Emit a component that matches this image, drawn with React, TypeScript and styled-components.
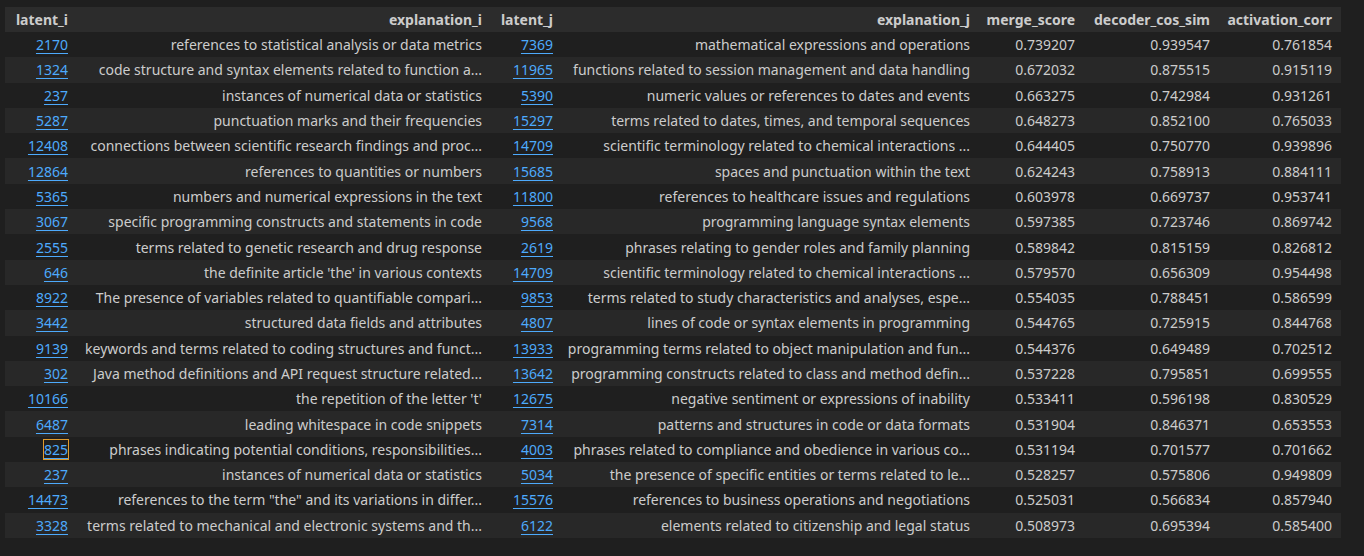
import { FC } from "react";
import styled, { createGlobalStyle } from "styled-components";

const GlobalStyle = createGlobalStyle`
  html, body {
    margin: 0;
    background: #1f1f1f;
  }
`;

const Page = styled.div`
  padding: 7px 23px 0 5px;
  font-family: "Noto Sans", "Open Sans", sans-serif;
  font-size: 14px;
  color: #cccccc;
`;

const Table = styled.table`
  width: 1336px;
  table-layout: fixed;
  border-collapse: collapse;
  border-spacing: 0;
`;

const HeadCell = styled.th`
  height: 25px;
  padding: 0 9px 0 4px;
  background: #2c2c2c;
  font-weight: 700;
  text-align: right;
  white-space: nowrap;
  overflow: hidden;
`;

const Row = styled.tr<{ $alt: boolean }>`
  background: ${(p) => (p.$alt ? "#282828" : "#1f1f1f")};
`;

const Cell = styled.td`
  height: 25.3px;
  padding: 0 9px 0 4px;
  text-align: right;
  white-space: nowrap;
  overflow: hidden;
  text-overflow: ellipsis;
`;

const LatentLink = styled.a<{ $focused?: boolean }>`
  color: #4daafc;
  text-decoration: underline;
  text-underline-offset: 3px;
  outline: ${(p) => (p.$focused ? "1px solid #e09b2d" : "none")};
  outline-offset: 0;
`;

const columns = [
  { name: "latent_i", width: 72 },
  { name: "explanation_i", width: 414 },
  { name: "latent_j", width: 71 },
  { name: "explanation_j", width: 417 },
  { name: "merge_score", width: 105 },
  { name: "decoder_cos_sim", width: 135 },
  { name: "activation_corr", width: 122 },
];

type Pair = [number, string, number, string, string, string, string];

const rows: Pair[] = [
  [2170, "references to statistical analysis or data metrics", 7369, "mathematical expressions and operations", "0.739207", "0.939547", "0.761854"],
  [1324, "code structure and syntax elements related to function a...", 11965, "functions related to session management and data handling", "0.672032", "0.875515", "0.915119"],
  [237, "instances of numerical data or statistics", 5390, "numeric values or references to dates and events", "0.663275", "0.742984", "0.931261"],
  [5287, "punctuation marks and their frequencies", 15297, "terms related to dates, times, and temporal sequences", "0.648273", "0.852100", "0.765033"],
  [12408, "connections between scientific research findings and proc...", 14709, "scientific terminology related to chemical interactions ...", "0.644405", "0.750770", "0.939896"],
  [12864, "references to quantities or numbers", 15685, "spaces and punctuation within the text", "0.624243", "0.758913", "0.884111"],
  [5365, "numbers and numerical expressions in the text", 11800, "references to healthcare issues and regulations", "0.603978", "0.669737", "0.953741"],
  [3067, "specific programming constructs and statements in code", 9568, "programming language syntax elements", "0.597385", "0.723746", "0.869742"],
  [2555, "terms related to genetic research and drug response", 2619, "phrases relating to gender roles and family planning", "0.589842", "0.815159", "0.826812"],
  [646, "the definite article 'the' in various contexts", 14709, "scientific terminology related to chemical interactions ...", "0.579570", "0.656309", "0.954498"],
  [8922, "The presence of variables related to quantifiable compari...", 9853, "terms related to study characteristics and analyses, espe...", "0.554035", "0.788451", "0.586599"],
  [3442, "structured data fields and attributes", 4807, "lines of code or syntax elements in programming", "0.544765", "0.725915", "0.844768"],
  [9139, "keywords and terms related to coding structures and funct...", 13933, "programming terms related to object manipulation and fun...", "0.544376", "0.649489", "0.702512"],
  [302, "Java method definitions and API request structure related...", 13642, "programming constructs related to class and method defin...", "0.537228", "0.795851", "0.699555"],
  [10166, "the repetition of the letter 't'", 12675, "negative sentiment or expressions of inability", "0.533411", "0.596198", "0.830529"],
  [6487, "leading whitespace in code snippets", 7314, "patterns and structures in code or data formats", "0.531904", "0.846371", "0.653553"],
  [825, "phrases indicating potential conditions, responsibilities...", 4003, "phrases related to compliance and obedience in various co...", "0.531194", "0.701577", "0.701662"],
  [237, "instances of numerical data or statistics", 5034, "the presence of specific entities or terms related to le...", "0.528257", "0.575806", "0.949809"],
  [14473, "references to the term \"the\" and its variations in differ...", 15576, "references to business operations and negotiations", "0.525031", "0.566834", "0.857940"],
  [3328, "terms related to mechanical and electronic systems and th...", 6122, "elements related to citizenship and legal status", "0.508973", "0.695394", "0.585400"],
];

// the link that has keyboard focus in the screenshot
const FOCUSED_ROW = 16;

const App: FC = () => {
  return (
    <Page>
      <GlobalStyle />
      <Table>
        <colgroup>
          {columns.map((col) => (
            <col key={col.name} style={{ width: col.width }} />
          ))}
        </colgroup>
        <thead>
          <tr>
            {columns.map((col) => (
              <HeadCell key={col.name}>{col.name}</HeadCell>
            ))}
          </tr>
        </thead>
        <tbody>
          {rows.map((row, i) => (
            <Row key={i} $alt={i % 2 === 1}>
              <Cell>
                <LatentLink href="#" $focused={i === FOCUSED_ROW}>
                  {row[0]}
                </LatentLink>
              </Cell>
              <Cell>{row[1]}</Cell>
              <Cell>
                <LatentLink href="#">{row[2]}</LatentLink>
              </Cell>
              <Cell>{row[3]}</Cell>
              <Cell>{row[4]}</Cell>
              <Cell>{row[5]}</Cell>
              <Cell>{row[6]}</Cell>
            </Row>
          ))}
        </tbody>
      </Table>
    </Page>
  );
};

export default App;
